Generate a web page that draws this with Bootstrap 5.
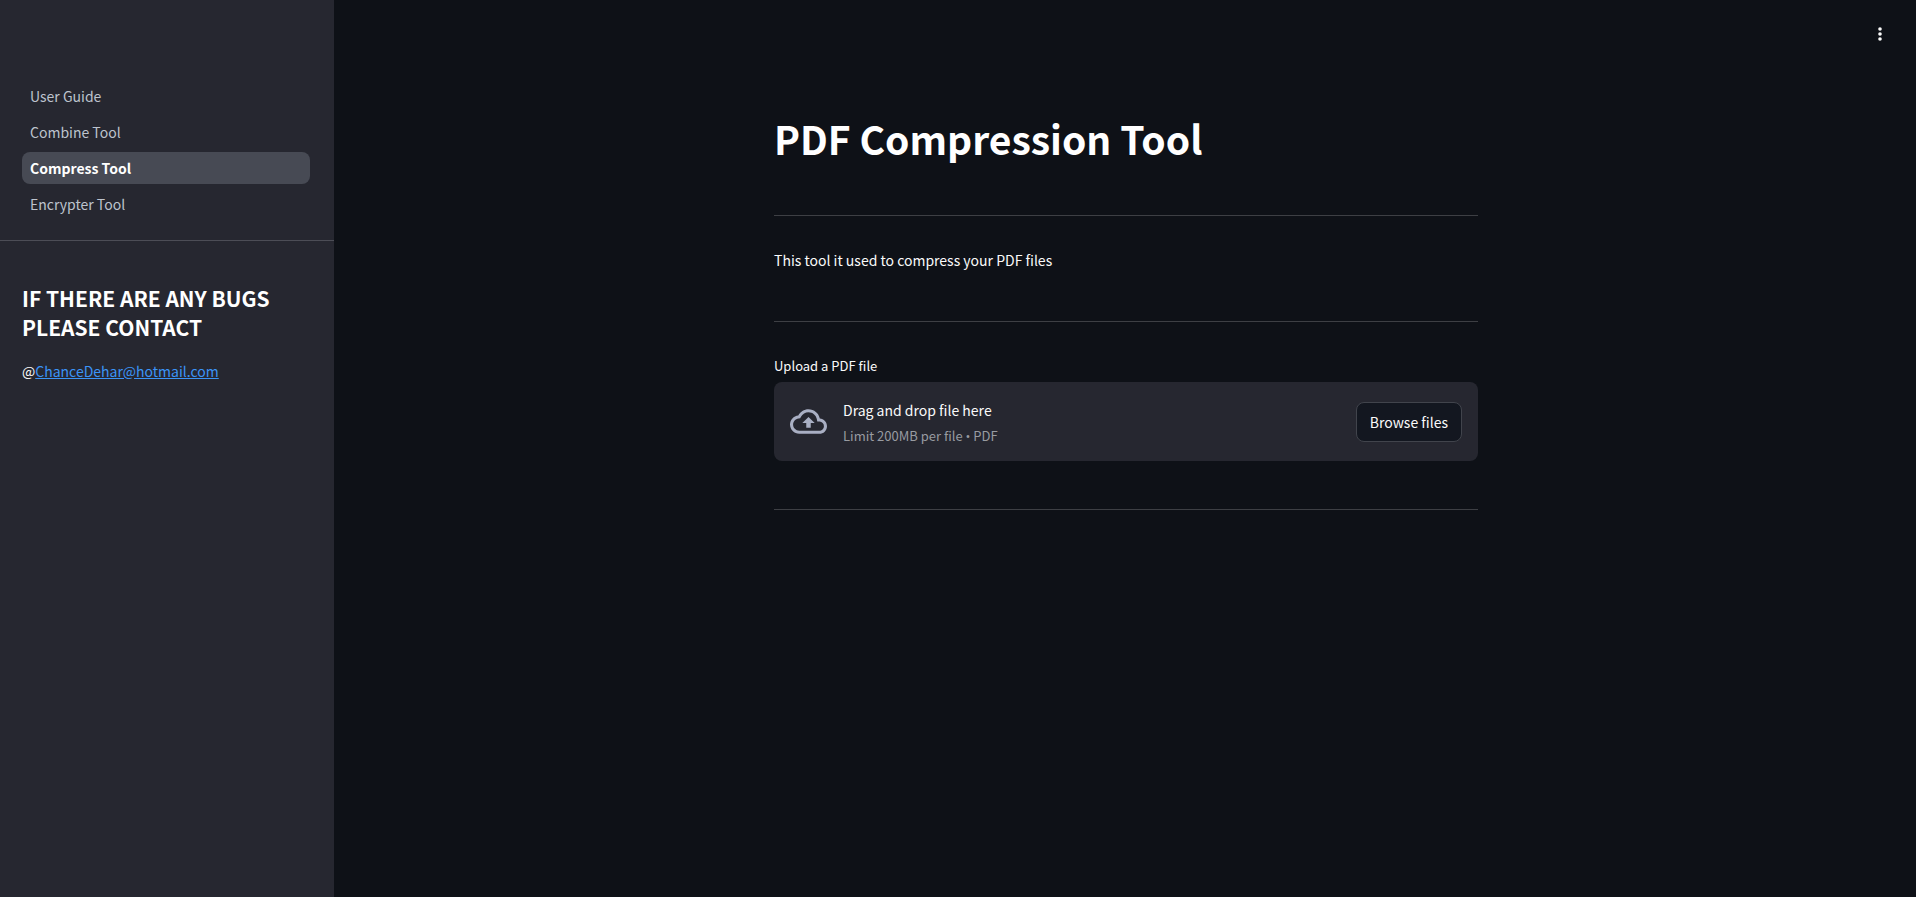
<!DOCTYPE html>
<html lang="en" data-bs-theme="dark">
<head>
<meta charset="utf-8">
<meta name="viewport" content="width=device-width, initial-scale=1">
<title>Compress Tool</title>
<link href="https://cdn.jsdelivr.net/npm/bootstrap@5.3.0/dist/css/bootstrap.min.css" rel="stylesheet">
<style>
  body {
    background: #0e1117;
    color: #fafafa;
    font-family: "Source Sans Pro", "Noto Sans CJK SC", sans-serif;
    font-size: 14px;
    line-height: 24px;
  }
  .sidebar { width: 334px; background: #262730; }
  .side-menu { padding: 80px 24px 20px 22px; gap: 4px; border-bottom: 1px solid #4c4d56; }
  .side-menu .nav-link { padding: 4px 8px; border-radius: 8px; color: #bdc3cd; }
  .side-menu .nav-link.active { background: #474a54; color: #fff; font-weight: 700; }
  .side-contact { padding: 43px 22px 0; }
  .side-contact h2 { font-size: 21px; line-height: 29px; font-weight: 600; margin-bottom: 17px; }
  .side-contact a { color: #3b94f7; }
  .topbar { height: 68px; padding: 0 28px; }
  .main-area { padding-left: 2px; }
  .kebab { width: 16px; height: 24px; line-height: 0; color: #fafafa; }
  .page-column { max-width: 736px; padding: 0 16px; }
  .page-column h1 { font-size: 39px; line-height: 56px; font-weight: 700; margin: 42px 0 49px; }
  .page-column hr { margin: 0; border-top: 1px solid #3d3f44; opacity: 1; }
  .intro { margin: 32px 0 49px; }
  .upload-label { font-size: 13px; line-height: 24px; margin: 32px 0 4px; }
  .dropzone { background: #262730; border-radius: 8px; padding: 12px 16px; gap: 16px; min-height: 79px; margin-bottom: 48px; }
  .drop-text { padding-top: 2px; gap: 2px; }
  .dropzone small { font-size: 13px; line-height: 24px; color: #989ba1; }
  .dot { font-family: "Open Sans", sans-serif; line-height: 1; }
  .cloud { fill: #a9afc3; }
  .btn-browse { background: #131720; border: 1px solid #41444c; border-radius: 8px; color: #fafafa; font-size: 14px; line-height: 24px; padding: 7px 13px; }
</style>
</head>
<body>
<div class="d-flex min-vh-100">
  <aside class="sidebar flex-shrink-0">
    <nav class="side-menu nav flex-column" aria-label="Pages">
      <a class="nav-link" href="#guide">User Guide</a>
      <a class="nav-link" href="#combine">Combine Tool</a>
      <a class="nav-link active" aria-current="page" href="#compress">Compress Tool</a>
      <a class="nav-link" href="#encrypt">Encrypter Tool</a>
    </nav>
    <div class="side-contact">
      <h2>IF THERE ARE ANY BUGS PLEASE CONTACT</h2>
      <p class="mb-0">@<a href="mailto:ChanceDehar@hotmail.com">ChanceDehar@hotmail.com</a></p>
    </div>
  </aside>
  <div class="main-area flex-grow-1">
    <header class="topbar d-flex align-items-center justify-content-end">
      <button class="kebab btn border-0 p-0" type="button" aria-label="Main menu">
        <svg width="16" height="16" viewBox="0 0 16 16" fill="currentColor" aria-hidden="true"><circle cx="8" cy="3" r="1.8"/><circle cx="8" cy="8" r="1.8"/><circle cx="8" cy="13" r="1.8"/></svg>
      </button>
    </header>
    <main class="page-column mx-auto">
      <h1>PDF Compression Tool</h1>
      <hr>
      <p class="intro">This tool it used to compress your PDF files</p>
      <hr>
      <label class="upload-label d-block" for="pdf">Upload a PDF file</label>
      <div class="dropzone d-flex align-items-center">
        <svg class="cloud flex-shrink-0" width="37" height="37" viewBox="0 0 24 24" aria-hidden="true"><path d="M19.35 10.04C18.67 6.59 15.64 4 12 4 9.11 4 6.6 5.64 5.35 8.04 2.34 8.36 0 10.91 0 14c0 3.31 2.69 6 6 6h13c2.76 0 5-2.24 5-5 0-2.64-2.05-4.78-4.65-4.96zM19 18H6c-2.21 0-4-1.79-4-4 0-2.05 1.53-3.76 3.56-3.97l1.07-.11.5-.95C8.08 7.14 9.94 6 12 6c2.62 0 4.88 1.86 5.39 4.43l.3 1.5 1.53.11c1.56.1 2.78 1.41 2.78 2.96 0 1.65-1.35 3-3 3zM8 13h2.55v3h2.9v-3H16l-4-4z"/></svg>
        <div class="drop-text d-flex flex-column me-auto">
          <span>Drag and drop file here</span>
          <small>Limit 200MB per file <span class="dot">•</span> PDF</small>
        </div>
        <input class="visually-hidden" type="file" id="pdf" accept=".pdf" tabindex="-1">
        <button class="btn btn-browse" type="button" onclick="document.getElementById('pdf').click()">Browse files</button>
      </div>
      <hr>
    </main>
  </div>
</div>
<script src="https://cdn.jsdelivr.net/npm/bootstrap@5.3.0/dist/js/bootstrap.bundle.min.js"></script>
</body>
</html>
